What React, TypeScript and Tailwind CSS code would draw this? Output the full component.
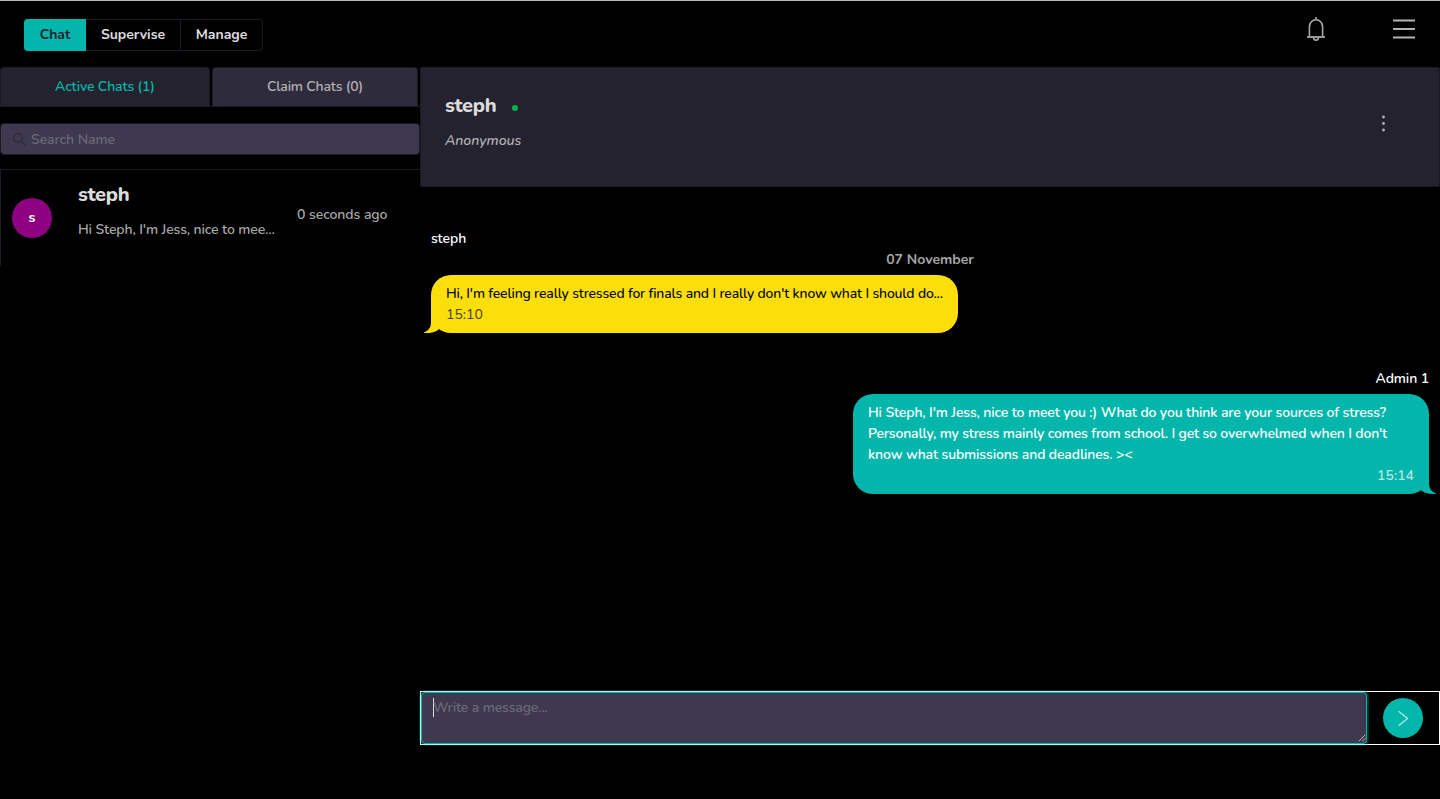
import type { ReactNode } from 'react';

function BellIcon() {
  return (
    <svg width="20" height="26" viewBox="0 0 20 26" fill="none" stroke="#a9a9a9" strokeWidth="1.6">
      <path d="M10 1v3" />
      <path d="M3.4 20.6V11a6.6 7.3 0 0 1 13.2 0v9.6" />
      <path d="M1 21h18" strokeWidth="1.8" />
      <path d="M7.5 21.6a2.5 2.6 0 0 0 5 0" />
    </svg>
  );
}

function MenuIcon() {
  return (
    <svg width="22" height="20" viewBox="0 0 22 20" fill="#b3b3b3">
      <rect y="0.5" width="22" height="2" />
      <rect y="9" width="22" height="2" />
      <rect y="17.5" width="22" height="2" />
    </svg>
  );
}

function SearchIcon() {
  return (
    <svg width="13" height="13" viewBox="0 0 13 13" fill="none" stroke="#2a2736" strokeWidth="1.1">
      <circle cx="5" cy="5" r="4.3" />
      <path d="M8.2 8.2l4.2 4.2" />
    </svg>
  );
}

function NavButton({ label, className }: { label: string; className: string }) {
  return (
    <button className={`flex h-8 items-center justify-center border-[#1c1924] pb-px font-bold ${className}`}>{label}</button>
  );
}

function Bubble({ side, text, time }: { side: 'left' | 'right'; text: ReactNode; time: string }) {
  const left = side === 'left';
  return (
    <div
      className={`relative mt-[5px] rounded-[20px] px-[15px] py-2 leading-[21px] ${
        left
          ? 'w-[527px] self-start bg-[#fbde0a] font-medium text-black'
          : 'w-[576px] self-end bg-[#02b6ac] font-semibold text-white'
      }`}
    >
      <span
        className={`absolute bottom-0 size-5 ${
          left ? '-left-[7px] rounded-br-[15px] bg-[#fbde0a]' : '-right-[7px] rounded-bl-[15px] bg-[#02b6ac]'
        }`}
      />
      <span
        className={`absolute bottom-0 h-5 w-2.5 bg-black ${
          left ? '-left-[10px] rounded-br-[10px]' : '-right-[10px] rounded-bl-[10px]'
        }`}
      />
      <div className="relative">{text}</div>
      <div className={`relative ${left ? 'text-black/70' : 'text-right text-white/70'}`}>{time}</div>
    </div>
  );
}

export default function App() {
  return (
    <div className="flex h-[799px] w-[1440px] flex-col overflow-hidden border-t border-[#b4b8b8] bg-black font-['Nunito','Lato',sans-serif] text-sm leading-[21px] font-semibold text-[#a6a6a6]">
      <header className="flex h-[66px] shrink-0 items-start justify-between pl-6">
        <nav className="mt-[18px] flex text-[#dcdcdc]">
          <NavButton label="Chat" className="w-[62px] rounded-l bg-[#02b6ac] text-[#24222f]" />
          <NavButton label="Supervise" className="w-[95px] border-y border-r" />
          <NavButton label="Manage" className="w-[82px] rounded-r border-y border-r" />
        </nav>
        <div className="mt-[15px] flex items-start gap-[67px] pr-[25px]">
          <BellIcon />
          <div className="mt-[3px]">
            <MenuIcon />
          </div>
        </div>
      </header>

      <div className="flex min-h-0 flex-1">
        <aside className="flex w-[420px] shrink-0 flex-col">
          <div className="flex h-10 gap-0.5 border-b border-[#1c1924]">
            <div className="flex w-[210px] items-center justify-center rounded-t border border-b-0 border-[#1c1924] bg-[#24222e] pb-0.5 tracking-[-0.15px] text-[#02b6ac]">
              Active Chats (1)
            </div>
            <div className="flex w-[206px] items-center justify-center rounded-t border border-b-0 border-[#1c1924] bg-[#2e2b3b] pb-0.5 tracking-[-0.19px] text-[#b2b1b6]">
              Claim Chats (0)
            </div>
          </div>
          <label className="mt-4 flex h-8 items-center gap-[5px] rounded border border-[#1c1924] bg-[#3e394e] pl-3">
            <SearchIcon />
            <input
              className="w-80 tracking-[-0.07px] text-[#dcdcdc] outline-none placeholder:text-[#6c687a]"
              placeholder="Search Name"
            />
          </label>
          <div className="mt-3.5 flex h-[97px] border-t border-l border-[#1c1924]">
            <div className="mt-7 ml-[11px] flex size-10 items-center justify-center rounded-full bg-[#8e0281] pb-0.5 font-bold text-white">
              s
            </div>
            <div className="ml-[26px] w-[219px] pt-2.5">
              <h4 className="text-xl leading-[30px] font-extrabold tracking-[-0.3px] text-[#dcdcdc]">steph</h4>
              <p className="mt-[9px] tracking-[-0.12px]">Hi Steph, I'm Jess, nice to mee...</p>
            </div>
            <div className="pt-[34px] tracking-[-0.06px]">0 seconds ago</div>
          </div>
        </aside>

        <main className="flex min-w-0 flex-1 flex-col">
          <section className="flex h-[120px] shrink-0 justify-between rounded-xs border border-[#1c1924] bg-[#24222e] pl-6">
            <div className="pt-[23px]">
              <div className="flex items-center">
                <h4 className="w-[51px] text-xl leading-[30px] font-extrabold tracking-[-0.3px] text-[#dcdcdc]">steph</h4>
                <span className="mt-1 ml-4 size-1.5 rounded-full bg-[#02b050]" />
              </div>
              <p className="mt-[9px] text-[#b2b1b6] italic">Anonymous</p>
            </div>
            <svg className="mt-[47px] mr-[53px]" width="4" height="18" viewBox="0 0 4 18" fill="#b2b1b6">
              <circle cx="1.5" cy="2" r="1.4" />
              <circle cx="1.5" cy="8.5" r="1.4" />
              <circle cx="1.5" cy="15" r="1.4" />
            </svg>
          </section>

          <section className="flex h-[504px] shrink-0 flex-col pt-[41px] pr-[11px] pl-[11px]">
            <div className="tracking-[-0.1px] text-white">steph</div>
            <div className="text-center font-bold">07 November</div>
            <Bubble
              side="left"
              text={
                <span className="tracking-[-0.145px] whitespace-nowrap">
                  Hi, I'm feeling really stressed for finals and I really don't know what I should do...
                </span>
              }
              time="15:10"
            />
            <div className="mt-[35px] self-end text-white tracking-[-0.1px]">Admin 1</div>
            <Bubble
              side="right"
              text={
                <>
                  <div className="tracking-[-0.135px]">
                    Hi Steph, I'm Jess, nice to meet you :) What do you think are your sources of stress?
                  </div>
                  <div className="tracking-[-0.165px]">
                    Personally, my stress mainly comes from school. I get so overwhelmed when I don't
                  </div>
                  <div className="tracking-[-0.135px]">know what submissions and deadlines. &gt;&lt;</div>
                </>
              }
              time="15:14"
            />
          </section>

          <footer className="flex h-[54px] shrink-0 border border-white">
            <div className="relative flex w-[946px] rounded border border-[#02b6ac] bg-[#3e394e] pt-1 pl-[11px] text-[#6c687a] shadow-[0_0_0_2px_rgba(2,182,172,0.25)]">
              <span className="mt-px h-[19px] w-px bg-[#dcdcdc]" />
              <span className="-ml-px tracking-[-0.14px]">Write a message...</span>
              <svg className="absolute right-0 bottom-px" width="8" height="8" viewBox="0 0 8 8" stroke="#c8c8c8" strokeWidth="0.9">
                <path d="M0.7 7.3l6.6-6.6M4.2 7.3l3.1-3.1" />
              </svg>
            </div>
            <button className="mt-1.5 ml-4 flex size-10 items-center justify-center rounded-full bg-[#02b6ac]">
              <svg width="12" height="18" viewBox="0 0 12 18" fill="none" stroke="#b3e9e6" strokeWidth="1.3">
                <path d="M1.5 2.2l9 7.3-9 7.3" />
              </svg>
            </button>
          </footer>
        </main>
      </div>
    </div>
  );
}
